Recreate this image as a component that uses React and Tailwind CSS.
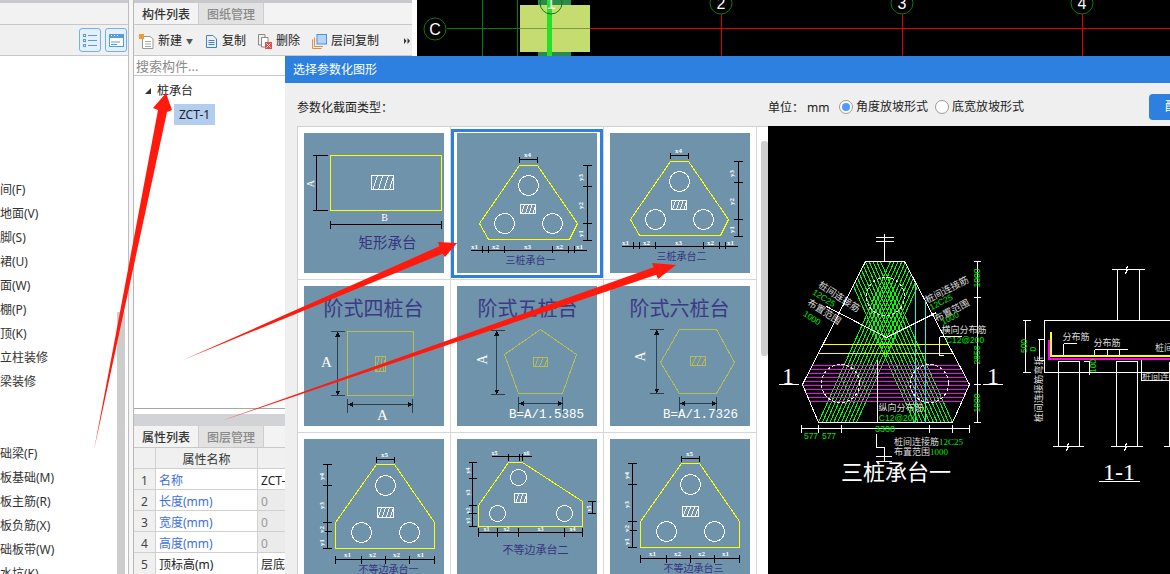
import React from "react";

const UI = "font-['Noto_Sans','Noto_Sans_CJK_SC',sans-serif]";

const T = ({ x, y, s = 7, c = "#fff", a = "middle", r, w, f, children }) => (
  <text
    x={x}
    y={y}
    fontSize={s}
    fill={c}
    textAnchor={a}
    dominantBaseline="central"
    fontWeight={w}
    fontFamily={f || "'Liberation Serif','Noto Sans CJK SC',serif"}
    transform={r ? `rotate(${r} ${x} ${y})` : undefined}
  >
    {children}
  </text>
);

const Hatch = ({ x, y, w, h, c = "#fff", n = 4, sw = 1 }) => {
  const gap = w / n;
  let d = "";
  for (let i = 0; i < n; i++) {
    const a = x + gap * i + gap * 0.2;
    d += `M${a} ${y + h}L${a + gap * 0.8} ${y}`;
  }
  return (
    <g>
      <rect x={x} y={y} width={w} height={h} fill="none" stroke={c} strokeWidth={sw} />
      <path d={d} stroke={c} strokeWidth="0.9" fill="none" />
    </g>
  );
};

const Circles = ({ items, r = 10 }) =>
  items.map(([x, y], i) => <circle key={i} cx={x} cy={y} r={r} fill="none" stroke="#fff" strokeWidth="1" />);

const Svg = ({ children }) => (
  <svg viewBox="0 0 140 140" shapeRendering="crispEdges" className="block w-[140px] h-[140px] bg-[#6e93aa]">
    <g transform="translate(0.5 0.5)">{children}</g>
  </svg>
);

const TITLE = "#38337f";
const DARK = "#2b3f4c";
const OL = "#b8bd52";
const Y = "#ffff00";

const Tri = ({ title }) => (
  <>
    <polygon points="62,32 80,32 120,90 112,106 31,106 22,90" fill="none" stroke={Y} strokeWidth="1" />
    <Circles items={[[71, 52], [47, 90], [95, 90]]} />
    <Hatch x={63} y={71} w={15} h={9} />
    <path d="M62 23V29M80 23V29M62 26H80" stroke="#000" strokeWidth="1" />
    <T x={70} y={21} s={7} w="bold">x4</T>
    <path d="M130 32V107M125 32H134M125 53H134M125 90H134M125 107H134" stroke="#000" strokeWidth="1" />
    <T x={123} y={44} s={7} r={-90} w="bold">y3</T>
    <T x={123} y={72} s={7} r={-90} w="bold">y2</T>
    <T x={123} y={100} s={7} r={-90} w="bold">y1</T>
    <path d="M13 117H129M25 112V119M31 112V119M47 112V119M95 112V119M111 112V119M117 112V119" stroke="#000" strokeWidth="1" />
    {[[17, "x1"], [38, "x2"], [70, "x3"], [102, "x2"], [122, "x1"]].map(([x, t], i) => (
      <T key={i} x={x} y={113} s={7} w="bold">{t}</T>
    ))}
    <T x={73} y={127} s={10} c={TITLE}>{title}</T>
  </>
);

const Uneq = ({ title }) => (
  <>
    <polygon points="72,25 90,25 130,83 130,109 31,109 31,83" fill="none" stroke={Y} strokeWidth="1" />
    <Circles items={[[81, 46], [57, 93], [105, 93]]} />
    <Hatch x={73} y={68} w={16} h={10} />
    <path d="M72 17V23M90 17V23M72 20H90" stroke="#000" strokeWidth="1" />
    <T x={80} y={15} s={7} w="bold">x5</T>
    <path d="M23 25V109M18 25H27M18 46H27M18 83H27M18 92H27M18 109H27" stroke="#000" strokeWidth="1" />
    {[[37, "y4"], [66, "y3"], [90, "y2"], [103, "y1"]].map(([y, t], i) => (
      <T key={i} x={17} y={y} s={7} r={-90} w="bold">{t}</T>
    ))}
    <path d="M31 120H130M31 116V124M57 116V124M81 116V124M105 116V124M130 116V124" stroke="#000" strokeWidth="1" />
    {[[43, "x1"], [68, "x2"], [92, "x2"], [116, "x1"]].map(([x, t], i) => (
      <T key={i} x={x} y={115} s={7} w="bold">{t}</T>
    ))}
    <T x={84} y={130} s={10} c={TITLE}>{title}</T>
  </>
);

const thumbs = [
  <Svg key="1">
    <rect x="26" y="22" width="111" height="55" fill="none" stroke={Y} strokeWidth="1" />
    <Hatch x={67} y={42} w={22} h={14} />
    <path d="M12 22V77M8 22H23M8 77H23M26 91H137M26 87V95M137 87V95" stroke="#000" strokeWidth="1" />
    <T x={6} y={50} s={10} r={-90}>A</T>
    <T x={80} y={84} s={10}>B</T>
    <T x={83} y={109} s={14.500} c={TITLE}>矩形承台</T>
  </Svg>,
  <Svg key="2"><Tri title="三桩承台一" /></Svg>,
  <Svg key="3">
    <g transform="translate(-2 -4)"><Tri title="三桩承台二" /></g>
  </Svg>,
  <Svg key="4">
    <T x={69} y={22} s={20} c="#3c3a85">阶式四桩台</T>
    <rect x="43" y="45" width="66" height="64" fill="none" stroke={OL} />
    <Hatch x={71} y={70} w={10} h={15} c={OL} n={3} />
    <path d="M33 45V109M26 45H40M26 109H40M43 118H108M43 112V126M108 112V126" stroke={DARK} />
    <path d="M33 45l-2.500 5h5zM33 109l-2.500 -5h5zM43 118l5 -2.500v5zM108 118l-5 -2.500v5z" fill="#111" />
    <T x={22} y={75} s={15}>A</T>
    <T x={78} y={128} s={15}>A</T>
  </Svg>,
  <Svg key="5">
    <T x={70} y={22} s={20} c="#3c3a85">阶式五桩台</T>
    <polygon points="83,43 119,68 105,107 61,107 47,68" fill="none" stroke={OL} />
    <Hatch x={76} y={71} w={14} h={9} c={OL} n={3} />
    <path d="M39 44V108M33 44H47M33 108H47M61 117H105M61 110V126M105 110V126" stroke={DARK} />
    <path d="M39 44l-2.500 5h5zM39 108l-2.500 -5h5zM61 117l5 -2.500v5zM105 117l-5 -2.500v5z" fill="#111" />
    <T x={25} y={73} s={14} r={-90}>A</T>
    <T x={89} y={128} s={12.500} f="'Liberation Mono',monospace">B=A/1.5385</T>
  </Svg>,
  <Svg key="6">
    <T x={69} y={22} s={20} c="#3c3a85">阶式六桩台</T>
    <polygon points="69,43 106,43 124,76 106,107 69,107 50,76" fill="none" stroke={OL} />
    <Hatch x={80} y={70} w={15} h={9} c={OL} n={3} />
    <path d="M46 43V107M39 43H53M39 107H53M69 117H106M69 110V124M106 110V124" stroke={DARK} />
    <path d="M46 43l-2.500 5h5zM46 107l-2.500 -5h5zM69 117l5 -2.500v5zM106 117l-5 -2.500v5z" fill="#111" />
    <T x={30} y={70} s={14} r={-90}>A</T>
    <T x={90} y={128} s={12.500} f="'Liberation Mono',monospace">B=A/1.7326</T>
  </Svg>,
  <Svg key="7"><Uneq title="不等边承台一" /></Svg>,
  <Svg key="8">
    <polygon points="51,23 65,23 125,62 125,87 21,87 21,66" fill="none" stroke={Y} strokeWidth="1" />
    <Circles r={8} items={[[61, 38], [40, 74], [107, 74]]} />
    <Hatch x={57} y={54} w={12} h={9} n={3} />
    <path d="M34 17H74M51 14V21M62 14V21M65 14V21" stroke="#000" strokeWidth="1" />
    <T x={37} y={13} s={6} w="bold">x5</T>
    <T x={69} y={13} s={6} w="bold">x6</T>
    <path d="M15 23V87M11 23H19M11 39H19M11 66H19M11 74H19M11 87H19M135 62V74M130 62H138M130 74H138" stroke="#000" strokeWidth="1" />
    {[[10, 31, "y4"], [10, 53, "y3"], [10, 71, "y2"], [10, 81, "y1"], [131, 69, "y5"]].map(([x, y, t], i) => (
      <T key={i} x={x} y={y} s={6} r={-90} w="bold">{t}</T>
    ))}
    <path d="M21 93H125M21 88V97M40 88V97M61 88V97M107 88V97M125 88V97" stroke="#000" strokeWidth="1" />
    {[[29, "x1"], [49, "x2"], [83, "x3"], [115, "x4"]].map(([x, t], i) => (
      <T key={i} x={x} y={89} s={6} w="bold">{t}</T>
    ))}
    <T x={78} y={110} s={11} c={TITLE}>不等边承台二</T>
  </Svg>,
  <Svg key="9">
    <g transform="translate(-1 -1)"><Uneq title="不等边承台三" /></g>
  </Svg>,
];

const Preview = () => {
  const hatch = [];
  for (let x = 818; x <= 858; x += 3.8) hatch.push(`M${x} 422L${x + 72} 261`);
  for (let x = 914; x <= 954; x += 3.8) hatch.push(`M${x} 422L${x - 72} 261`);
  const magenta = [365, 369, 373, 377, 381, 385, 389, 393, 397, 401];
  const G = "#00e800";
  const Sans = "'Liberation Sans','Noto Sans CJK SC',sans-serif";
  return (
    <svg viewBox="768 126 402 448" shapeRendering="crispEdges" className="block w-[402px] h-[448px] bg-black">
      <defs>
        <clipPath id="hex">
          <polygon points="865,261 904,261 969,384 952,422 818,422 802,384" />
        </clipPath>
      </defs>
      <g transform="translate(0.5 0.5)">
        <g clipPath="url(#hex)">
          <path d={hatch.join("")} stroke="#00ff00" strokeWidth="1" fill="none" />
          {magenta.map((y) => (
            <path key={y} d={`M800 ${y}H970`} stroke="#ff00ff" strokeWidth="1" />
          ))}
          <path d="M822 344H947M817 353H952" stroke="#ffff00" strokeWidth="1" />
        </g>
        <polygon points="865,261 904,261 969,384 952,422 818,422 802,384" fill="none" stroke="#fff" strokeWidth="1" />
        <g fill="none" stroke="#fff" strokeDasharray="3 2">
          <circle cx="885" cy="296" r="19" />
          <circle cx="840" cy="383" r="19" />
          <circle cx="929" cy="383" r="19" />
        </g>
        <path d="M915 282V422M925 300V422" stroke="#00ffff" />
        <path d="M826 306L886 337L936 312M884 233V261M875 237H893M875 241H893M877 359V422M876 433V447H884M884 447V461M875 456H891M875 461H891" stroke="#fff" fill="none" />
        <path d="M939 336V355M939 336H961M943 355H939" stroke="#fff" fill="none" />
        <path d="M778 384H798M982 384H1002M977 261V422M973 261H980M973 297H980M973 384H980M973 422H980M801 428H969M801 424V432M818 424V432M841 424V432M929 424V432M952 424V432M969 424V432" stroke="#fff" fill="none" />
        <path d="M1170 320H1044V372H1170M1117 320V269M1139 320V269M1111 269H1125l2 -3l-2 7l2 -4H1144M1058 446V361H1079V446M1052 446H1066l2 -3l-2 7l2 -4H1083M1116 446V361H1137V446M1110 446H1124l2 -3l-2 7l2 -4H1142M1169 361V446M1163 446H1170M1063 343H1076M1063 343V356M1094 349H1127M1094 349V356M1107 349V356M1119 349V356M1141 358V380H1170M1025 320V372M1022 320H1030M1022 372H1030M1039 339V360M1037 339H1044M1037 360H1044M1083 361H1089V374" stroke="#fff" fill="none" />
        <path d="M1050 331V355H1170" stroke="#ffff00" strokeWidth="2" fill="none" />
        <path d="M1048 339V358H1170" stroke="#ff00ff" strokeWidth="2" fill="none" />
        <path d="M1098 481H1139" stroke="#fff" />
      </g>
      <T x={788} y={376} s={24}>1</T>
      <T x={993} y={376} s={24}>1</T>
      <T x={839} y={297} s={9.500} r={33} c="#ddd">桩间连接筋</T>
      <T x={824} y={298} s={8.500} r={33} c={G} f={Sans}>12C25</T>
      <T x={824} y={312} s={9.500} r={33} c="#ddd">布置范围</T>
      <T x={812} y={318} s={8.500} r={33} c={G} f={Sans}>1000</T>
      <T x={947} y={290} s={9.500} r={-27} c="#ddd">桩间连接筋</T>
      <T x={941} y={302} s={8.500} r={-27} c={G} f={Sans}>12C25</T>
      <T x={952} y={311} s={9.500} r={-27} c="#ddd">布置范围</T>
      <T x={950} y={318} s={8.500} r={-27} c={G} f={Sans}>1000</T>
      <T x={964} y={330} s={9} c="#ddd">横向分布筋</T>
      <T x={965} y={340} s={8.500} c={G} f={Sans}>C12@200</T>
      <T x={901} y={408} s={9} c="#ddd">纵向分布筋</T>
      <T x={898} y={418} s={8.500} c={G} f={Sans}>C12@200</T>
      <T x={977} y={278} s={8.500} r={-90} c={G} f={Sans}>1000</T>
      <T x={977} y={355} s={8.500} r={-90} c={G} f={Sans}>2858</T>
      <T x={977} y={403} s={8.500} r={-90} c={G} f={Sans}>1000</T>
      <T x={811} y={436} s={8.500} c={G} f={Sans}>577</T>
      <T x={829} y={436} s={8.500} c={G} f={Sans}>577</T>
      <T x={885} y={429} s={9} c={G} f={Sans}>3300</T>
      <T x={894} y={442} s={9} a="start" c="#ddd">桩间连接筋<tspan fill={G}>12C25</tspan></T>
      <T x={894} y={452} s={9} a="start" c="#ddd">布置范围<tspan fill={G}>1000</tspan></T>
      <T x={896} y={472} s={22}>三桩承台一</T>
      <T x={1076} y={337} s={9} c="#ddd">分布筋</T>
      <T x={1107} y={343} s={9} c="#ddd">分布筋</T>
      <T x={1155} y={348} s={9} a="start" c="#ddd">桩间</T>
      <T x={1142} y={377} s={9} a="start" c="#ddd">桩间连接筋</T>
      <T x={1024} y={346} s={8.500} r={-90} c={G} f={Sans}>500</T>
      <T x={1033} y={349} s={8.500} r={-90} c={G} f={Sans}>0</T>
      <T x={1093} y={366} s={8.500} r={-90} c={G} f={Sans}>100</T>
      <T x={1039} y={389} s={9.500} r={-90} c="#ddd">桩间连接筋弯折</T>
      <T x={1119} y={472} s={24}>1-1</T>
    </svg>
  );
};

const Cad = () => (
  <svg viewBox="417 0 753 56" className="block w-[753px] h-[56px] bg-black">
    <path d="M482.500 0V56M517.500 0V56M447 28.500H552" stroke="#0a7a0a" />
    <path d="M552 28.500H1170M721.500 14V56M902.500 14V56M1082.500 14V56" stroke="#e00000" />
    <rect x="538" y="0" width="33" height="56" fill="#2c8a4e" />
    <rect x="520" y="5" width="70" height="47" fill="#c5dc70" />
    <path d="M520 28.500H590" stroke="#7a9a3a" />
    <rect x="547" y="0" width="5" height="56" fill="#26e026" />
    {[[551, 3, "1"], [721, 3, "2"], [902, 3, "3"], [1082, 3, "4"], [435, 29, "C"]].map(([x, y, t]) => (
      <g key={t}>
        <circle cx={x} cy={y} r="11" fill="none" stroke="#0a7a0a" />
        <T x={x} y={y} s={16} f="'Liberation Sans',sans-serif">{t}</T>
      </g>
    ))}
  </svg>
);

const left1 = ["间(F)", "地面(V)", "脚(S)", "裙(U)", "面(W)", "棚(P)", "顶(K)", "立柱装修", "梁装修"];
const left2 = ["础梁(F)", "板基础(M)", "板主筋(R)", "板负筋(X)", "础板带(W)", "水坑(K)"];

const LeftPanel = () => (
  <div className="w-[128px] shrink-0 h-full flex flex-col bg-white overflow-hidden">
    <div className="h-[3px] bg-[#c9c9cd]" />
    <div className="h-[22px] bg-[#f2f2f2] border-b border-[#c8c8c8]" />
    <div className="h-[31px] bg-[#f0f0f0] border-b border-[#c8c8c8] flex items-center justify-end gap-[4px] pr-[1px]">
      <div className="w-[22px] h-[24px] rounded-[3px] border border-[#6fb0f5] bg-[#e4f0fc] flex items-center justify-center">
        <svg width="14" height="14" viewBox="0 0 14 14" fill="none" stroke="#5a9ae0">
          <path d="M5 2.500H14M5 7.500H14M5 12.500H14" />
          <rect x="0.500" y="1.500" width="2" height="2" />
          <rect x="0.500" y="6.500" width="2" height="2" />
          <rect x="0.500" y="11.500" width="2" height="2" />
        </svg>
      </div>
      <div className="w-[22px] h-[24px] rounded-[3px] border border-[#6fb0f5] bg-[#e4f0fc] flex items-center justify-center">
        <svg width="15" height="13" viewBox="0 0 15 13">
          <rect x="0.500" y="0.500" width="14" height="12" fill="#fff" stroke="#5a9ae0" />
          <rect x="0" y="0" width="15" height="4" fill="#5a9ae0" />
          <path d="M2 1.500H3M5 1.500H6M8 1.500H9" stroke="#fff" />
          <path d="M2 8H11M2 10.500H8" stroke="#5a9ae0" />
        </svg>
      </div>
    </div>
    <div className="flex flex-1 min-h-0">
      <div className="w-[117px] pt-[122px] text-[12px] leading-[24px] text-[#333] whitespace-nowrap">
        {left1.map((t) => <div key={t} className="h-[24px]">{t}</div>)}
        <div className="h-[48px]" />
        {left2.map((t) => <div key={t} className="h-[24px]">{t}</div>)}
      </div>
      <div className="w-[8px] mt-[256px] bg-[#cdcdcd]" />
    </div>
  </div>
);

const Tabs = ({ a, b }) => (
  <div className="h-[22px] flex bg-[#f3f3f3] border-b border-[#c8c8c8] text-[12px] leading-[23px] font-medium">
    <div className="w-[64px] text-center text-[#333]">{a}</div>
    <div className="w-[66px] text-center text-[#8a8a8a] bg-[#e2e2e2] border-x border-[#cdcdcd]">{b}</div>
  </div>
);

const ToolBtn = ({ icon, w, children }) => (
  <div className={`flex items-center gap-[4px] ${w}`}>
    {icon}
    <span>{children}</span>
  </div>
);

const rows = [
  ["1", "名称", "ZCT-1", true],
  ["2", "长度(mm)", "0"],
  ["3", "宽度(mm)", "0"],
  ["4", "高度(mm)", "0"],
];

const MiddlePanel = () => (
  <div className="w-[279px] shrink-0 h-full flex flex-col bg-white border-l border-[#b8b8b8] text-[12px] text-[#222]">
    <div className="h-[3px] bg-[#c9c9cd]" />
    <Tabs a="构件列表" b="图纸管理" />
    <div className="h-[31px] bg-[#f0f0f0] border-b border-[#c8c8c8] flex items-center pl-[5px] pt-[3px] whitespace-nowrap">
      <ToolBtn
        w="w-[66px]"
        icon={
          <svg width="15" height="15" viewBox="0 0 15 15" fill="none">
            <path d="M3.500 2.500H11L14 5V14.500H3.500Z" fill="#fff" stroke="#9a9a9a" />
            <path d="M6 7.500H12M6 10H12M6 12.500H12" stroke="#aaa" />
            <rect x="0" y="0" width="5" height="5" fill="#f29b2e" />
          </svg>
        }
      >
        新建<span className="text-[7px] text-[#555] ml-[4px] align-middle">▼</span>
      </ToolBtn>
      <ToolBtn
        w="w-[53px]"
        icon={
          <svg width="13" height="15" viewBox="0 0 13 15" fill="none" stroke="#3f83cc">
            <path d="M1.500 1.500H8L11.500 5V13.500H1.500Z" />
            <path d="M3.500 6.500H9.500M3.500 8.500H9.500M3.500 10.500H9.500" />
          </svg>
        }
      >
        复制
      </ToolBtn>
      <ToolBtn
        w="w-[54px]"
        icon={
          <svg width="14" height="15" viewBox="0 0 14 15" fill="none">
            <path d="M0.500 0.500H7V11H0.500Z" stroke="#888" />
            <path d="M3.500 3.500H10V13H3.500Z" fill="#fff" stroke="#888" />
            <rect x="7" y="8" width="7" height="7" fill="#e0504a" />
            <path d="M8.500 9.500L12.500 13.500M12.500 9.500L8.500 13.500" stroke="#fff" />
          </svg>
        }
      >
        删除
      </ToolBtn>
      <ToolBtn
        w="w-[92px]"
        icon={
          <svg width="15" height="15" viewBox="0 0 15 15" fill="none">
            <path d="M0.500 14.500V5.500M0.500 14.500H9.500M2.500 12.500V3.500M2.500 12.500H11" stroke="#e58a45" />
            <rect x="5" y="0.500" width="9.500" height="9.500" fill="#b8d4f4" stroke="#4a90d9" />
          </svg>
        }
      >
        层间复制
      </ToolBtn>
      <svg width="6" height="6" viewBox="0 0 6 6" fill="#333">
        <path d="M0 0L2.500 3L0 6ZM3.500 0L6 3L3.500 6Z" />
      </svg>
    </div>
    <div className="h-[20px] border-b border-[#c8c8c8] pl-[2px] leading-[21px] text-[13px] text-[#8a8a8a]">搜索构件...</div>
    <div className="h-[334px] border-b border-[#a8a8a8] pt-[5px] pl-[11px]">
      <div className="flex items-center h-[20px]">
        <span className="w-0 h-0 border-l-[6px] border-l-transparent border-b-[6px] border-b-[#333] mr-[6px]" />
        <span>桩承台</span>
      </div>
      <div className="ml-[29px] mt-[3px] w-[41px] h-[21px] bg-[#b3cdee] leading-[21px] text-center">ZCT-1</div>
    </div>
    <div className="h-[5px]" />
    <div className="h-[12px] bg-[#d2d3d7]" />
    <Tabs a="属性列表" b="图层管理" />
    <div className="grid grid-cols-[22px_102px_1fr] flex-1 leading-[24px]">
      <div className="h-[21px] bg-[#f0f0f0] border-r border-b border-[#d0d0d0]" />
      <div className="h-[21px] bg-[#f0f0f0] border-r border-b border-[#d0d0d0] text-center text-[#333]">属性名称</div>
      <div className="h-[21px] bg-[#f0f0f0] border-b border-[#d0d0d0]" />
      {rows.map(([n, name, v, on]) => (
        <React.Fragment key={n}>
          <div className="h-[21px] bg-[#f0f0f0] border-r border-b border-[#d0d0d0] text-center text-[#444]">{n}</div>
          <div className="h-[21px] border-r border-b border-[#d0d0d0] pl-[3px] text-[#3d6fe0]">{name}</div>
          <div className={on ? "h-[21px] border-b border-[#d0d0d0] pl-[3px] whitespace-nowrap" : "h-[21px] bg-[#ebebeb] border-b border-[#d0d0d0] pl-[3px] text-[#999]"}>{v}</div>
        </React.Fragment>
      ))}
      <div className="h-[21px] bg-[#f0f0f0] border-r border-[#d0d0d0] text-center text-[#444]">5</div>
      <div className="h-[21px] border-r border-[#d0d0d0] pl-[3px]">顶标高(m)</div>
      <div className="h-[21px] pl-[3px] whitespace-nowrap">层底标高</div>
    </div>
  </div>
);

const Radio = ({ on, children }) => (
  <div className="flex items-center gap-[3px] shrink-0">
    <span className="w-[14px] h-[14px] rounded-full border border-[#9a9a9a] bg-white flex items-center justify-center">
      {on && <span className="w-[8px] h-[8px] rounded-full bg-[#4d9bff]" />}
    </span>
    <span className="leading-[28px]">{children}</span>
  </div>
);

const Dialog = () => (
  <div className="absolute left-[285px] top-[56px] w-[885px] h-[518px] flex flex-col bg-[#efefef] text-[12px] text-[#222] overflow-hidden">
    <div className="h-[27px] bg-[#2d7fe0] text-white leading-[27px] pl-[8px] shrink-0">选择参数化图形</div>
    <div className="h-[43px] shrink-0 flex items-start pt-[11px] pl-[12px] leading-[28px] whitespace-nowrap">
      <span className="w-[471px] h-[26px] shrink-0">参数化截面类型：</span>
      <span className="w-[71px] h-[26px] shrink-0">单位： mm</span>
      <div className="flex gap-[7px] h-[26px] items-center shrink-0">
        <Radio on>角度放坡形式</Radio>
        <Radio>底宽放坡形式</Radio>
      </div>
      <div className="ml-[125px] w-[40px] h-[26px] rounded-l-[4px] bg-[#2d7fe0] text-white leading-[26px] pl-[16px] shrink-0">配筋</div>
    </div>
    <div className="flex flex-1 min-h-0">
      <div className="w-[12px] shrink-0" />
      <div className="w-[471px] shrink-0 flex bg-white border-t border-[#d0d0d0]">
        <div className="w-[1px] h-full bg-[#d0d0d0] shrink-0" />
        <div className="grid grid-cols-[repeat(3,153px)] auto-rows-[153px] w-[459px] shrink-0">
          {thumbs.map((t, i) => (
            <div key={i} className="relative p-[6px] border-r border-b border-[#d6d6d6]">
              {t}
              {i === 1 && <span className="absolute left-0 top-[2px] w-[152px] h-[149px] border-[3px] border-[#2d7fe0]" />}
            </div>
          ))}
        </div>
        <div className="pl-[4px] pt-[14px]">
          <div className="w-[7px] h-[215px] rounded-[3px] bg-[#cfcfcf]" />
        </div>
      </div>
      <Preview />
    </div>
  </div>
);

const Arrows = () => (
  <svg viewBox="0 0 1170 574" className="absolute inset-0 w-[1170px] h-[574px] pointer-events-none">
    <g fill="#ff1a0d">
      <polygon points="94,450 158,110 153,108 166,93 172,110 167,112" />
      <polygon points="183,360 439.400,246.300 438,242 457,243 445,257 442.600,253.700" />
      <polygon points="221,421 653.700,267.200 652,263 676,265 658,279 656.300,274.800" />
    </g>
  </svg>
);

export default function App() {
  return (
    <div className={`relative w-[1170px] h-[574px] overflow-hidden bg-white flex ${UI}`}>
      <LeftPanel />
      <div className="w-[1px] h-full bg-[#bdbdbd] shrink-0" />
      <div className="w-[4px] h-full bg-[#f6f6f6] shrink-0" />
      <MiddlePanel />
      <div className="w-[5px] shrink-0" />
      <div className="flex-1 h-[56px] overflow-hidden"><Cad /></div>
      <Dialog />
      <Arrows />
    </div>
  );
}
